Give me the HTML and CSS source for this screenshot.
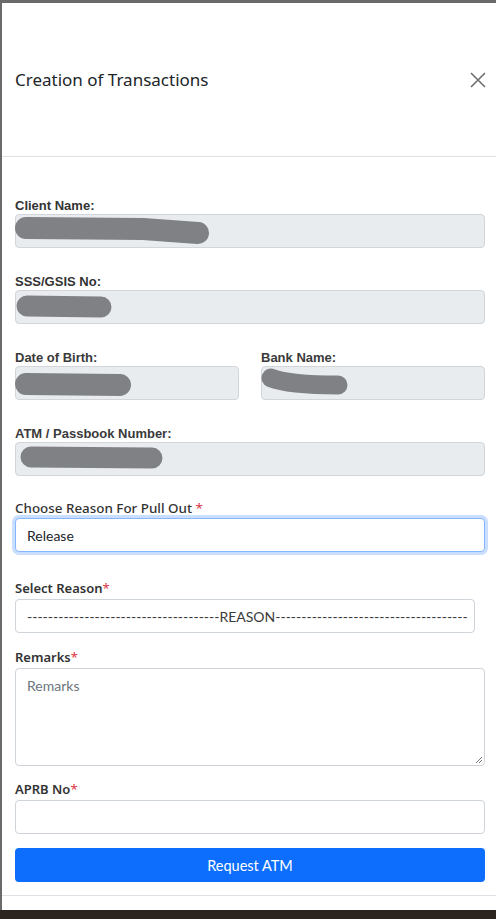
FILE: index.html
```html
<!DOCTYPE html>
<html>
<head>
<meta charset="utf-8">
<title>Creation of Transactions</title>
<link rel="stylesheet" href="styles.css">
</head>
<body>
<div class="screen">
  <div class="modal">
    <div class="modal-header">
      <h5 class="modal-title">Creation of Transactions</h5>
      <button class="close" type="button" aria-label="Close">
        <svg width="16" height="16" viewBox="0 0 16 16"><path d="M1 1L15 15M15 1L1 15" stroke="#6f6f6f" stroke-width="1.6" fill="none"/></svg>
      </button>
    </div>
    <div class="modal-body">
      <div class="group g-client">
        <label class="lbl-bold">Client Name:</label>
        <div class="field readonly">
          <svg class="redact" width="470" height="34" viewBox="0 0 470 34"><path d="M11 14 L128 15 L183 19" stroke="#808185" stroke-width="22" stroke-linecap="round" stroke-linejoin="round" fill="none"/></svg>
        </div>
      </div>
      <div class="group g-sss">
        <label class="lbl-bold">SSS/GSIS No:</label>
        <div class="field readonly">
          <svg class="redact" width="470" height="34" viewBox="0 0 470 34"><path d="M12 16 L86 17" stroke="#808185" stroke-width="21" stroke-linecap="round" fill="none"/></svg>
        </div>
      </div>
      <div class="row g-dob">
        <div class="col">
          <label class="lbl-bold lbl-soft">Date of Birth:</label>
          <div class="field readonly">
            <svg class="redact" width="224" height="34" viewBox="0 0 224 34"><path d="M11 18 L105 19" stroke="#808185" stroke-width="22" stroke-linecap="round" fill="none"/></svg>
          </div>
        </div>
        <div class="col">
          <label class="lbl-bold lbl-soft">Bank Name:</label>
          <div class="field readonly">
            <svg class="redact" width="224" height="34" viewBox="0 0 224 34"><path d="M10 12 Q28 19 77 19" stroke="#808185" stroke-width="19" stroke-linecap="round" fill="none"/></svg>
          </div>
        </div>
      </div>
      <div class="group g-atm">
        <label class="lbl-bold lbl-soft">ATM / Passbook Number:</label>
        <div class="field readonly">
          <svg class="redact" width="470" height="34" viewBox="0 0 470 34"><path d="M16 15 L137 16" stroke="#808185" stroke-width="21" stroke-linecap="round" fill="none"/></svg>
        </div>
      </div>
      <div class="group g-pull">
        <label class="lbl-ui">Choose Reason For Pull Out <span class="req">*</span></label>
        <div class="field focus"><span class="val">Release</span></div>
      </div>
      <div class="group g-select">
        <label class="lbl-semi">Select Reason<span class="req">*</span></label>
        <div class="field select"><span class="val">-------------------------------------REASON-------------------------------------</span></div>
      </div>
      <div class="group g-remarks">
        <label class="lbl-semi">Remarks<span class="req">*</span></label>
        <div class="field textarea"><span class="ph">Remarks</span>
          <svg class="grip" width="8" height="8" viewBox="0 0 8 8"><path d="M7 1L1 7M7 4L4 7" stroke="#666" stroke-width="0.9" fill="none"/></svg>
        </div>
      </div>
      <div class="group g-aprb">
        <label class="lbl-semi">APRB No<span class="req">*</span></label>
        <div class="field plain"></div>
      </div>
      <button class="btn-primary" type="button">Request ATM</button>
    </div>
    <div class="modal-footer"></div>
  </div>
  <div class="desk"></div>
</div>
</body>
</html>
```
FILE: styles.css
```css
* { box-sizing: border-box; }
html, body { margin: 0; padding: 0; }
body { width: 496px; height: 919px; overflow: hidden; background: #666; font-family: "Noto Sans", "Open Sans", sans-serif; color: #212529; }
.screen { display: flex; flex-direction: column; height: 919px; padding-top: 3px; background: #6a6a6a; }
.modal { flex: 0 0 907px; margin-left: 2px; background: #fff; display: flex; flex-direction: column; }
.desk { flex: 1; background: #2c241f; }
.modal-header { height: 154px; border-bottom: 1px solid #dee2e6; display: flex; align-items: center; justify-content: space-between; padding: 0 10px 0 13px; }
.modal-title { margin: 0; font-size: 17px; font-weight: 400; color: #212529; }
.close { background: none; border: 0; padding: 0; width: 16px; height: 16px; display: flex; }
.modal-body { padding: 40px 11px 0 13px; display: flex; flex-direction: column; }
.group { display: flex; flex-direction: column; }
label { display: block; }
.lbl-bold { font-family: "Liberation Sans", Arial, sans-serif; font-weight: 700; font-size: 13px; line-height: 17px; color: #333; margin-bottom: 0; }
.lbl-soft { color: #3a3a3a; }
.lbl-ui { font-size: 13.4px; font-weight: 500; line-height: 18px; color: #333; margin-bottom: 1px; }
.lbl-semi { font-size: 13px; font-weight: 600; line-height: 18px; color: #333; margin-bottom: 2px; }
.req { color: #dc3545; font-weight: 400; }
.field { position: relative; height: 34px; border: 1px solid #ced4da; border-radius: 4px; background: #fff; display: flex; align-items: center; padding: 0 11px; font-family: Lato, "Noto Sans", sans-serif; font-size: 14px; color: #212529; }
.readonly { background: #e9ecef; padding: 0; border-color: #d2d6da; }
.redact { position: absolute; left: -1px; top: -1px; }
.focus { border-color: #86b7fe; box-shadow: 0 0 0 3px rgba(13,110,253,.22); }
.select { width: 460px; padding: 0 4px 0 11px; white-space: nowrap; overflow: hidden; color: #3a3a3a; }
.textarea { height: 98px; align-items: flex-start; padding: 8px 11px; }
.ph { color: #6c757d; }
.grip { position: absolute; right: 1px; bottom: 1px; }
.g-client { margin-top: 0; }
.g-sss { margin-top: 25px; }
.row { display: flex; gap: 22px; margin-top: 25px; }
.col { flex: 0 0 224px; display: flex; flex-direction: column; }
.g-atm { margin-top: 25px; }
.g-pull { margin-top: 23px; }
.g-select { margin-top: 27px; }
.g-remarks { margin-top: 15px; }
.g-aprb { margin-top: 14px; }
.btn-primary { margin-top: 14px; height: 34px; width: 470px; border: 0; border-radius: 4px; background: #0d6efd; color: #fff; font-family: Lato, "Noto Sans", sans-serif; font-size: 14.5px; padding: 0; }
.modal-footer { margin-top: 13px; border-top: 1px solid #dee2e6; }
```
